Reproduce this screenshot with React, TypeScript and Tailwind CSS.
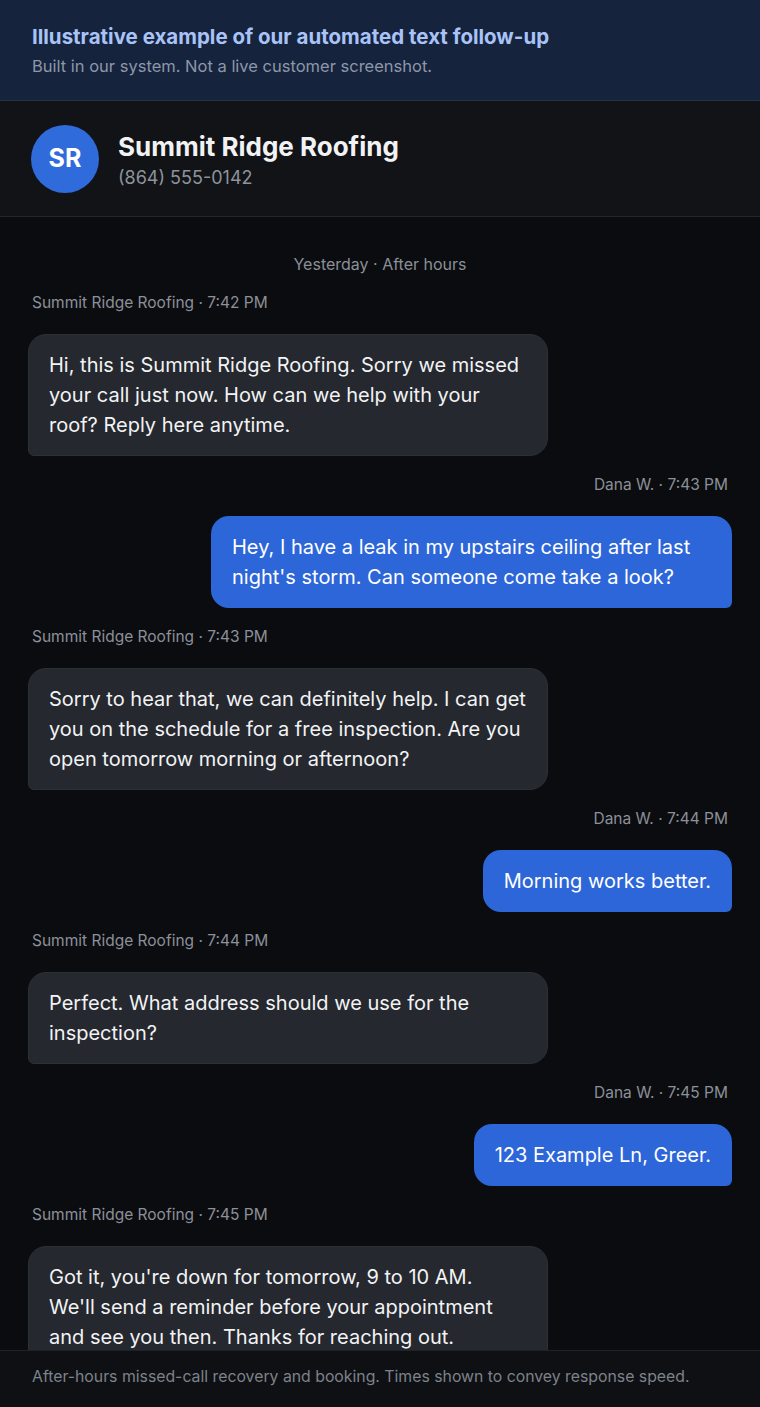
type Message = {
  from: "biz" | "me";
  label: string;
  text: string;
};

const messages: Message[] = [
  {
    from: "biz",
    label: "Summit Ridge Roofing · 7:42 PM",
    text: "Hi, this is Summit Ridge Roofing. Sorry we missed your call just now. How can we help with your roof? Reply here anytime.",
  },
  {
    from: "me",
    label: "Dana W. · 7:43 PM",
    text: "Hey, I have a leak in my upstairs ceiling after last night's storm. Can someone come take a look?",
  },
  {
    from: "biz",
    label: "Summit Ridge Roofing · 7:43 PM",
    text: "Sorry to hear that, we can definitely help. I can get you on the schedule for a free inspection. Are you open tomorrow morning or afternoon?",
  },
  { from: "me", label: "Dana W. · 7:44 PM", text: "Morning works better." },
  {
    from: "biz",
    label: "Summit Ridge Roofing · 7:44 PM",
    text: "Perfect. What address should we use for the inspection?",
  },
  { from: "me", label: "Dana W. · 7:45 PM", text: "123 Example Ln, Greer." },
  {
    from: "biz",
    label: "Summit Ridge Roofing · 7:45 PM",
    text: "Got it, you're down for tomorrow, 9 to 10 AM.\nWe'll send a reminder before your appointment and see you then. Thanks for reaching out.",
  },
];

const Bubble = ({ msg }: { msg: Message }) => {
  const mine = msg.from === "me";
  return (
    <div className={mine ? "flex flex-col items-end" : "flex flex-col items-start"}>
      <div className="h-5 px-1 text-[15.5px] leading-5 text-[#8b9099]">{msg.label}</div>
      <div
        className={
          mine
            ? "mt-[21px] max-w-[521px] whitespace-pre-line rounded-[18px] rounded-br-md bg-[#2d66d8] px-[21px] py-4 text-[20px] leading-[30px] text-white"
            : "mt-[21px] w-[520px] whitespace-pre-line rounded-[18px] rounded-bl-md border border-[#2c3037] bg-[#25282e] px-5 py-[15px] text-[20px] leading-[30px] text-[#f2f3f5]"
        }
      >
        {msg.text}
      </div>
    </div>
  );
};

export default function App() {
  return (
    <div className="flex h-[1407px] w-[760px] flex-col overflow-hidden bg-[#0b0c0f] font-['Inter','Liberation_Sans',Arial,sans-serif]">
      {/* Disclaimer banner */}
      <div className="h-[101px] shrink-0 border-b border-[#253248] bg-[#16233d] px-8 pt-[24px]">
        <div className="text-[20.5px] font-bold leading-[26px] text-[#a9c3f7]">
          Illustrative example of our automated text follow-up
        </div>
        <div className="mt-[6px] text-[16.5px] leading-5 text-[#8d97a9]">
          Built in our system. Not a live customer screenshot.
        </div>
      </div>

      {/* Contact header */}
      <div className="flex h-[116px] shrink-0 items-center gap-[19px] border-b border-[#24262b] bg-[#111317] px-[31px]">
        <div className="flex h-[68px] w-[68px] items-center justify-center rounded-full bg-[#2f6bdb] text-[25px] font-bold text-white">
          SR
        </div>
        <div className="mt-[3px]">
          <div className="text-[26px] font-bold leading-8 text-[#f1f2f4]">Summit Ridge Roofing</div>
          <div className="mt-[3px] text-[18px] leading-6 text-[#8e939b]">(864) 555-0142</div>
        </div>
      </div>

      {/* Conversation */}
      <div className="flex min-h-0 flex-1 flex-col gap-[19px] overflow-hidden px-7 pt-[37px]">
        <div className="text-center text-[16px] leading-5 text-[#8a8f98]">Yesterday · After hours</div>
        {messages.map((m, i) => (
          <Bubble key={i} msg={m} />
        ))}
      </div>

      {/* Footer note */}
      <div className="h-[57px] shrink-0 border-t border-[#1f2227] bg-[#0e1013] px-8 pt-[16px] text-[15.8px] leading-5 text-[#7d828b]">
        After-hours missed-call recovery and booking. Times shown to convey response speed.
      </div>
    </div>
  );
}
